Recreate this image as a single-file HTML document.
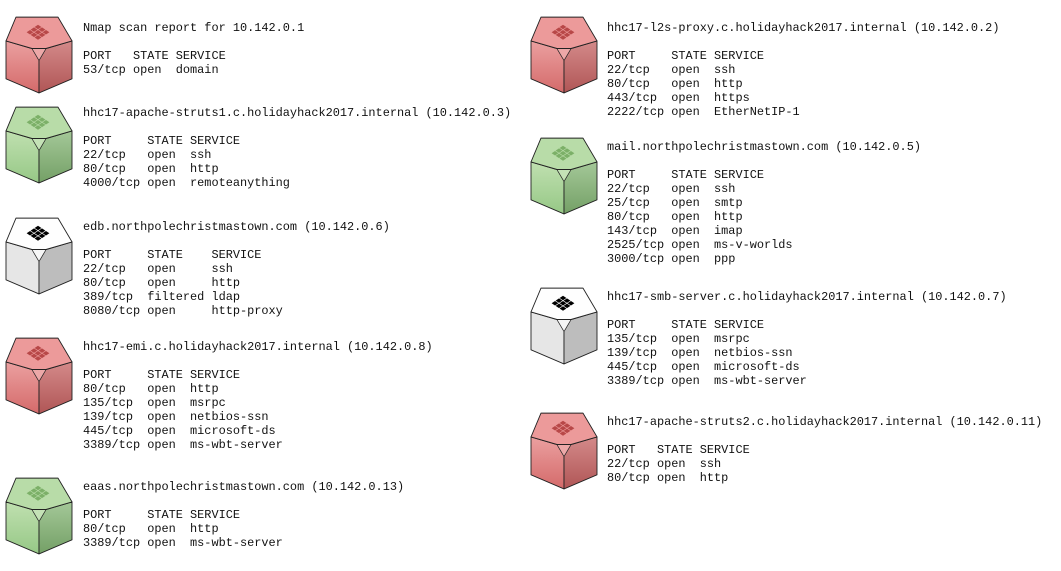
<!DOCTYPE html>
<html><head><meta charset="utf-8"><style>
body{margin:0;background:#fff;width:1061px;height:571px;position:relative;overflow:hidden}
pre{position:absolute;margin:0;font-family:"Liberation Mono",monospace;font-size:11.9px;line-height:14px;color:#111}
svg{position:absolute}
</style></head><body>
<svg width="0" height="0" style="position:absolute">
<defs>
<linearGradient id="rl" x1="0" y1="0" x2="0" y2="1"><stop offset="0" stop-color="#eba0a0"/><stop offset="1" stop-color="#d46a6a"/></linearGradient>
<linearGradient id="rr" x1="0" y1="0" x2="0" y2="1"><stop offset="0" stop-color="#d48a8a"/><stop offset="1" stop-color="#b05656"/></linearGradient>
<linearGradient id="gl" x1="0" y1="0" x2="0" y2="1"><stop offset="0" stop-color="#c0e0b0"/><stop offset="1" stop-color="#96c886"/></linearGradient>
<linearGradient id="gr" x1="0" y1="0" x2="0" y2="1"><stop offset="0" stop-color="#a4c898"/><stop offset="1" stop-color="#74a066"/></linearGradient>
<g id="grid">
<g transform="translate(32,14) scale(1.15,0.7) rotate(45)">
<rect x="-7" y="-7" width="4.2" height="4.2"/><rect x="-2.1" y="-7" width="4.2" height="4.2"/><rect x="2.8" y="-7" width="4.2" height="4.2"/>
<rect x="-7" y="-2.1" width="4.2" height="4.2"/><rect x="-2.1" y="-2.1" width="4.2" height="4.2"/><rect x="2.8" y="-2.1" width="4.2" height="4.2"/>
<rect x="-7" y="2.8" width="4.2" height="4.2"/><rect x="-2.1" y="2.8" width="4.2" height="4.2"/><rect x="2.8" y="2.8" width="4.2" height="4.2"/>
</g></g>
<g id="red"><g stroke="#222" stroke-width="0.9" stroke-linejoin="round"><polygon points="0,22 26,29 33,40 33,70 0,57" fill="url(#rl)"/><polygon points="66,22 40,29 33,40 33,70 66,57" fill="url(#rr)"/><polygon points="26,29 40,29 33,40" fill="#eca8a8" stroke-width="0.5"/><polygon points="10,0 52,0 66,22 40,29 26,29 0,22" fill="#ec9a9a"/></g><g fill="#b84848"><use href="#grid"/></g></g>
<g id="green"><g stroke="#222" stroke-width="0.9" stroke-linejoin="round"><polygon points="0,22 26,29 33,40 33,70 0,57" fill="url(#gl)"/><polygon points="66,22 40,29 33,40 33,70 66,57" fill="url(#gr)"/><polygon points="26,29 40,29 33,40" fill="#c4e2b6" stroke-width="0.5"/><polygon points="10,0 52,0 66,22 40,29 26,29 0,22" fill="#b8dca8"/></g><g fill="#7cb068"><use href="#grid"/></g></g>
<g id="gray"><g stroke="#222" stroke-width="0.9" stroke-linejoin="round"><polygon points="0,22 26,29 33,40 33,70 0,57" fill="#e6e6e6"/><polygon points="66,22 40,29 33,40 33,70 66,57" fill="#bdbdbd"/><polygon points="26,29 40,29 33,40" fill="#f6f6f6" stroke-width="0.5"/><polygon points="10,0 52,0 66,22 40,29 26,29 0,22" fill="#fefefe"/></g><g fill="#000"><use href="#grid"/></g></g>
</defs></svg>

<svg style="left:5px;top:16px" width="68" height="78" viewBox="-1 -1 68 72" preserveAspectRatio="none"><use href="#red"/></svg>
<svg style="left:5px;top:106px" width="68" height="78" viewBox="-1 -1 68 72" preserveAspectRatio="none"><use href="#green"/></svg>
<svg style="left:5px;top:217px" width="68" height="78" viewBox="-1 -1 68 72" preserveAspectRatio="none"><use href="#gray"/></svg>
<svg style="left:5px;top:337px" width="68" height="78" viewBox="-1 -1 68 72" preserveAspectRatio="none"><use href="#red"/></svg>
<svg style="left:5px;top:477px" width="68" height="78" viewBox="-1 -1 68 72" preserveAspectRatio="none"><use href="#green"/></svg>

<svg style="left:530px;top:16px" width="68" height="78" viewBox="-1 -1 68 72" preserveAspectRatio="none"><use href="#red"/></svg>
<svg style="left:530px;top:137px" width="68" height="78" viewBox="-1 -1 68 72" preserveAspectRatio="none"><use href="#green"/></svg>
<svg style="left:530px;top:287px" width="68" height="78" viewBox="-1 -1 68 72" preserveAspectRatio="none"><use href="#gray"/></svg>
<svg style="left:530px;top:412px" width="68" height="78" viewBox="-1 -1 68 72" preserveAspectRatio="none"><use href="#red"/></svg>

<pre style="left:83px;top:21px">Nmap scan report for 10.142.0.1

PORT   STATE SERVICE
53/tcp open  domain</pre>
<pre style="left:83px;top:106px">hhc17-apache-struts1.c.holidayhack2017.internal (10.142.0.3)

PORT     STATE SERVICE
22/tcp   open  ssh
80/tcp   open  http
4000/tcp open  remoteanything</pre>
<pre style="left:83px;top:220px">edb.northpolechristmastown.com (10.142.0.6)

PORT     STATE    SERVICE
22/tcp   open     ssh
80/tcp   open     http
389/tcp  filtered ldap
8080/tcp open     http-proxy</pre>
<pre style="left:83px;top:340px">hhc17-emi.c.holidayhack2017.internal (10.142.0.8)

PORT     STATE SERVICE
80/tcp   open  http
135/tcp  open  msrpc
139/tcp  open  netbios-ssn
445/tcp  open  microsoft-ds
3389/tcp open  ms-wbt-server</pre>
<pre style="left:83px;top:480px">eaas.northpolechristmastown.com (10.142.0.13)

PORT     STATE SERVICE
80/tcp   open  http
3389/tcp open  ms-wbt-server</pre>

<pre style="left:607px;top:21px">hhc17-l2s-proxy.c.holidayhack2017.internal (10.142.0.2)

PORT     STATE SERVICE
22/tcp   open  ssh
80/tcp   open  http
443/tcp  open  https
2222/tcp open  EtherNetIP-1</pre>
<pre style="left:607px;top:140px">mail.northpolechristmastown.com (10.142.0.5)

PORT     STATE SERVICE
22/tcp   open  ssh
25/tcp   open  smtp
80/tcp   open  http
143/tcp  open  imap
2525/tcp open  ms-v-worlds
3000/tcp open  ppp</pre>
<pre style="left:607px;top:290px">hhc17-smb-server.c.holidayhack2017.internal (10.142.0.7)

PORT     STATE SERVICE
135/tcp  open  msrpc
139/tcp  open  netbios-ssn
445/tcp  open  microsoft-ds
3389/tcp open  ms-wbt-server</pre>
<pre style="left:607px;top:415px">hhc17-apache-struts2.c.holidayhack2017.internal (10.142.0.11)

PORT   STATE SERVICE
22/tcp open  ssh
80/tcp open  http</pre>
</body></html>
